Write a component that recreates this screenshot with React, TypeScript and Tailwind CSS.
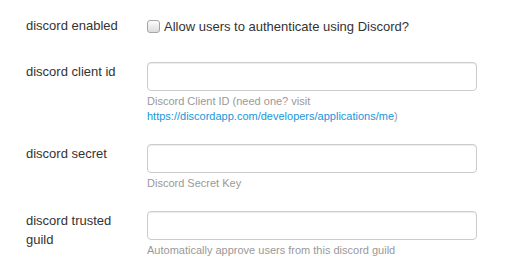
const font = { fontFamily: '"Liberation Sans", Arial, sans-serif' };

function Field({ label, help }: { label: React.ReactNode; help: React.ReactNode }) {
  return (
    <div className="grid grid-cols-[121px_330px] mb-[20px]">
      <label className="text-[13px] leading-[19px] text-[#333] pr-2">{label}</label>
      <div>
        <input
          type="text"
          className="block w-full h-[29px] rounded-[4px] border border-[#ccc] bg-white shadow-[inset_0_1px_1px_rgba(0,0,0,0.075)] outline-none"
        />
        <p className="mt-[3px] text-[11px] leading-[15px] text-[#999]">{help}</p>
      </div>
    </div>
  );
}

export default function App() {
  return (
    <div className="min-h-[272px] w-[518px] bg-white pl-[26px] pt-[16px]" style={font}>
      <div className="grid grid-cols-[121px_330px] mb-[26px]">
        <label className="text-[13px] leading-[19px] text-[#333]">discord enabled</label>
        <label className="flex items-center text-[13px] leading-[19px] text-[#333] pt-[1px]">
          <input
            type="checkbox"
            className="appearance-none w-[13px] h-[13px] m-0 mr-[4px] rounded-[3px] border border-[#a6a6a6] bg-gradient-to-b from-[#fcfcfc] to-[#dcdcdc]"
          />
          Allow users to authenticate using Discord?
        </label>
      </div>

      <Field
        label="discord client id"
        help={
          <>
            Discord Client ID (need one? visit
            <br />
            <a className="text-[#2196d9]" href="#">
              https://discordapp.com/developers/applications/me
            </a>
            )
          </>
        }
      />
      <Field label="discord secret" help="Discord Secret Key" />
      <Field
        label={
          <>
            discord trusted
            <br />
            guild
          </>
        }
        help="Automatically approve users from this discord guild"
      />
    </div>
  );
}
